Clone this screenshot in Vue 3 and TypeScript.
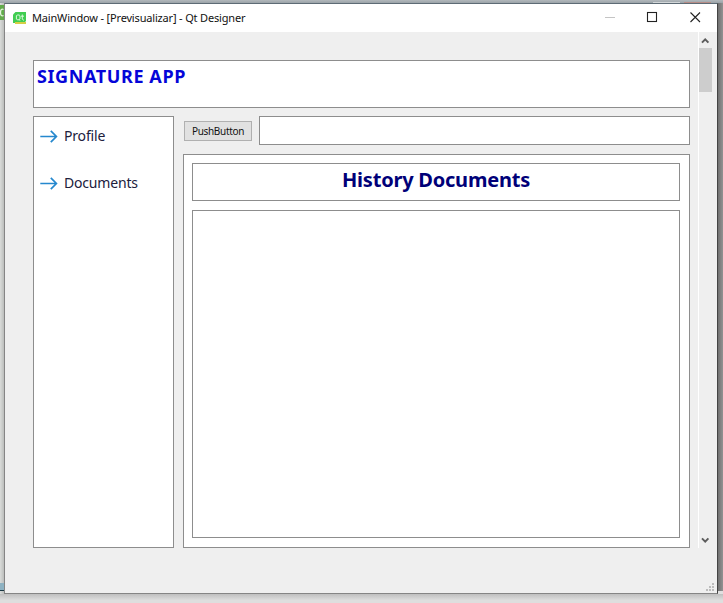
<script setup lang="ts">
interface NavItem {
  id: string
  label: string
}

const navItems: NavItem[] = [
  { id: 'profile', label: 'Profile' },
  { id: 'documents', label: 'Documents' },
]
</script>

<template>
  <div class="desktop">
    <div class="behind-top"><i class="tab"></i><i class="tab red"></i></div>
    <div class="behind-left">
      <svg class="green" width="4" height="15" viewBox="0 0 4 15" fill="none">
        <path d="M3.5 4.5C1.5 3.5 0.5 5 0.5 7.5S1.5 11.5 3.5 10.5" stroke="#e5f5df" stroke-width="1.3" />
      </svg>
      <i class="blue"></i>
    </div>
    <div class="behind-right"></div>
    <div class="window">
      <header class="titlebar">
        <svg class="logo" width="14" height="13" viewBox="0 0 14 13">
          <path d="M2.5 0H13V9L11 11H0V2.5Z" fill="#41cd52" />
          <path d="M2 10H13V12H2Z" fill="#d5cf45" />
          <path d="M4.2 3H6.2L7 3.8V7L6.2 7.8H4.2L3.4 7V3.8ZM6 7.5L7 8.7M9.3 2.5V7.2L10.2 8H11M8 4.2H11" fill="none" stroke="#d9f8dc" />
        </svg>
        <span class="title">MainWindow - [Previsualizar] - Qt Designer</span>
        <div class="controls">
          <svg width="112" height="28" viewBox="0 0 112 28" fill="none">
            <path d="M0 13.5H10" stroke="#c4c4c4" />
            <rect x="42.5" y="8.5" width="9" height="9" stroke="#222" stroke-width="1.1" />
            <path d="M85.5 8.5L95 18M95 8.5L85.5 18" stroke="#222" stroke-width="1.1" />
          </svg>
        </div>
      </header>

      <div class="body">
        <main class="content">
          <section class="frame banner"><h1>SIGNATURE APP</h1></section>
          <div class="columns">
            <nav class="frame sidebar">
              <a v-for="item in navItems" :key="item.id" class="nav-item">
                <svg width="18" height="14" viewBox="0 0 18 14" fill="none" stroke="#2588ce" stroke-width="1.7">
                  <path d="M0.3 7.5H16.3M10.8 1.9L16.4 7.5L10.8 13.1" />
                </svg>
                <span>{{ item.label }}</span>
              </a>
            </nav>
            <div class="workspace">
              <div class="toolbar">
                <button type="button" class="push">PushButton</button>
                <div class="frame field"></div>
              </div>
              <section class="frame panel">
                <div class="frame heading"><h2>History Documents</h2></div>
                <div class="frame list"></div>
              </section>
            </div>
          </div>
        </main>
        <div class="scrollbar">
          <svg width="13" height="16" viewBox="0 0 13 16" fill="none" stroke="#5c5c5c" stroke-width="2">
            <path d="M3 10.6L6.2 7.4L9.4 10.6" />
          </svg>
          <div class="thumb"></div>
          <svg class="down" width="13" height="16" viewBox="0 0 13 16" fill="none" stroke="#5c5c5c" stroke-width="2">
            <path d="M3 6.4L6.2 9.6L9.4 6.4" />
          </svg>
        </div>
      </div>

      <footer class="statusbar">
        <svg width="9" height="9" viewBox="0 0 9 9" fill="#bcbcbc">
          <path d="M6 0H8V2H6ZM3 3H5V5H3ZM6 3H8V5H6ZM0 6H2V8H0ZM3 6H5V8H3ZM6 6H8V8H6Z" />
        </svg>
      </footer>
    </div>
    <div class="behind-bottom"></div>
  </div>
</template>

<style>
body {
  margin: 0;
  overflow: hidden;
}
</style>

<style scoped>
* {
  box-sizing: border-box;
}
.desktop {
  width: 723px;
  height: 603px;
  display: grid;
  grid-template-columns: 4px 714px 5px;
  grid-template-rows: 3px 591px 9px;
  background: #e0e0e0;
  font-family: "Noto Sans", "Open Sans", sans-serif;
}
.behind-top {
  grid-column: 1 / 4;
  display: flex;
  justify-content: flex-end;
  gap: 4px;
  padding: 2px 12px 0 0;
  background: linear-gradient(#b2b8bc, #9ba3a8);
}
.tab {
  width: 27px;
  height: 1px;
  background: #d2d6d8;
}
.tab.red {
  background: #b78c86;
}
.behind-left {
  grid-row: 2;
  grid-column: 1;
  display: flex;
  flex-direction: column;
  justify-content: space-between;
  padding: 2px 0 3px;
  background: linear-gradient(90deg, #dadcda, #bcbebc);
}
.green {
  display: block;
  background: #62ab4b;
}
.blue {
  height: 8px;
  background: #8eb2c2;
  border-bottom: 1px solid #193743;
}
.behind-right {
  grid-row: 2;
  grid-column: 3;
  margin-bottom: 3px;
  background: linear-gradient(90deg, #707070, #929292);
}
.behind-bottom {
  grid-row: 3;
  grid-column: 1 / 4;
  background: linear-gradient(#bfbfbf, #dedede 70%);
}
.window {
  grid-row: 2;
  grid-column: 2;
  display: flex;
  flex-direction: column;
  border: 1px solid #858585;
  border-top-color: #5d6b75;
  border-right-color: #444;
  background: #efefef;
}
.titlebar {
  height: 28px;
  display: flex;
  align-items: center;
  padding-left: 8px;
  background: #fff;
}
.title {
  margin-left: 5px;
  font-size: 11px;
  line-height: 28px;
  letter-spacing: -0.17px;
  color: #111;
  white-space: nowrap;
}
.controls {
  margin-left: auto;
  height: 28px;
}
.controls svg {
  display: block;
}
.body {
  height: 516px;
  display: flex;
}
.content {
  width: 693px;
  padding: 28px 8px 0 28px;
  display: flex;
  flex-direction: column;
  gap: 8px;
}
.frame {
  border: 1px solid #8d8d8d;
  background: #fff;
}
.banner {
  height: 48px;
  padding: 1px 0 0 3px;
}
h1,
h2 {
  margin: 0;
  font-weight: 700;
  line-height: 28px;
  white-space: nowrap;
}
h1 {
  font-size: 18px;
  letter-spacing: 0.6px;
  color: #0505d8;
}
h2 {
  font-size: 20px;
  letter-spacing: -0.22px;
  color: #000078;
  text-align: center;
}
.columns {
  display: flex;
  gap: 9px;
  height: 432px;
}
.sidebar {
  width: 141px;
  padding: 7px 0 0 6px;
  display: flex;
  flex-direction: column;
  gap: 23px;
}
.nav-item {
  height: 24px;
  display: flex;
  align-items: center;
  gap: 6px;
  font-size: 14px;
  line-height: 24px;
  letter-spacing: -0.18px;
  color: #20203c;
}
.workspace {
  flex: 1;
  display: flex;
  flex-direction: column;
  gap: 9px;
}
.toolbar {
  display: flex;
  align-items: center;
  gap: 7px;
  height: 29px;
  padding-left: 1px;
}
.push {
  width: 68px;
  height: 20px;
  padding: 0;
  border: 1px solid #b0b0b0;
  border-radius: 0;
  background: #e1e1e1;
  color: #111;
  font: 10px/18px "Noto Sans", sans-serif;
  letter-spacing: -0.32px;
}
.field {
  flex: 1;
  height: 29px;
}
.panel {
  flex: 1;
  display: flex;
  flex-direction: column;
  gap: 9px;
  padding: 8px 9px 9px 8px;
}
.heading {
  height: 38px;
  padding-top: 2px;
}
.list {
  flex: 1;
}
.scrollbar {
  width: 14px;
  display: flex;
  flex-direction: column;
  border-left: 1px solid #fff;
}
.scrollbar svg {
  display: block;
  flex: none;
}
.thumb {
  height: 44px;
  background: #cdcdcd;
}
.down {
  margin-top: auto;
}
.statusbar {
  flex: 1;
  display: flex;
  justify-content: flex-end;
  align-items: flex-end;
  padding: 0 2px 1px 0;
}
</style>
